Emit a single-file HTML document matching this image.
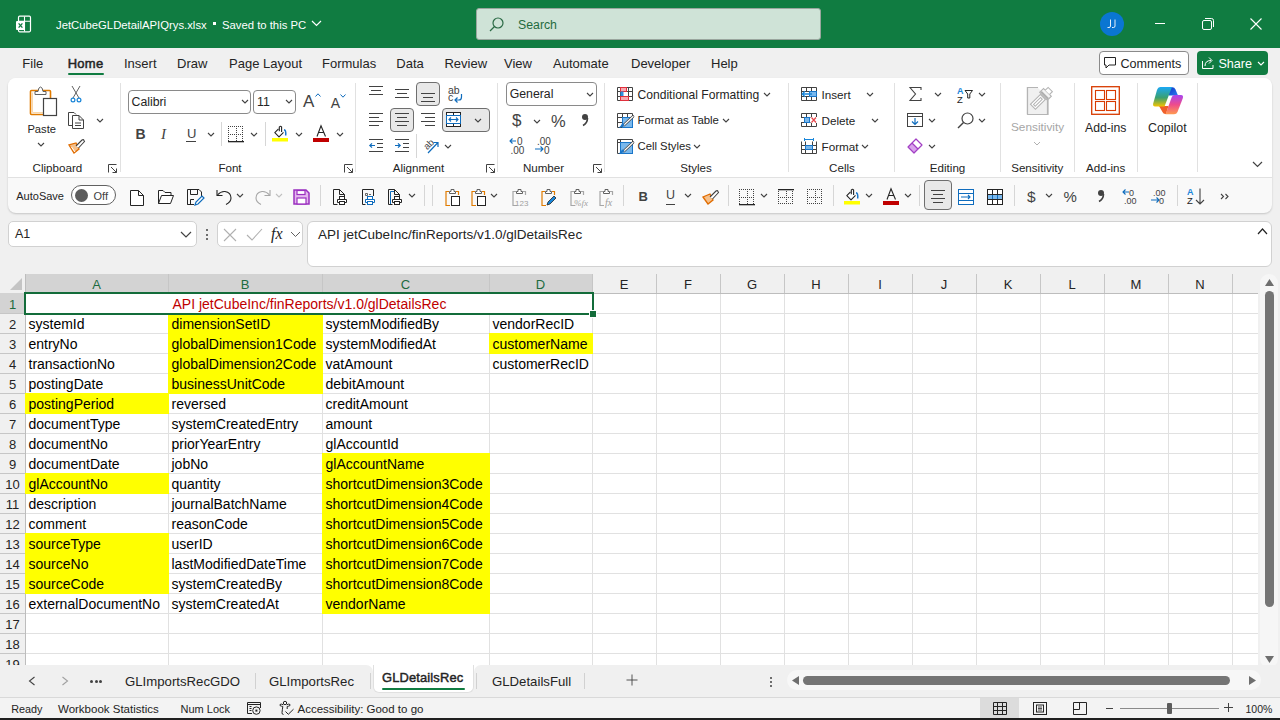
<!DOCTYPE html><html><head><meta charset="utf-8"><style>*{margin:0;padding:0;box-sizing:border-box}
html,body{width:1280px;height:720px;overflow:hidden;background:#f0f0f0;font-family:"Liberation Sans",sans-serif;color:#242424}
.a{position:absolute;white-space:nowrap}
svg{position:absolute;overflow:visible}
#title{left:0;top:0;width:1280px;height:48px;background:#107c41}
.t{position:absolute;white-space:nowrap;line-height:1}
</style></head><body><div class="a" style="left:0px;top:0px;width:1280px;height:48px;background:#107c41"></div>
<svg style="left:15px;top:15px" width="17" height="18" viewBox="0 0 17 18"><rect x="3.5" y="1.2" width="12" height="15.6" rx="1.2" fill="none" stroke="#fff" stroke-width="1.2"/><path d="M9.5 1.5 V16.5 M3.5 6.3 H15.5" stroke="#fff" stroke-width="1.1"/><rect x="1" y="6" width="9" height="9" rx="1" fill="#fff"/><path d="M3.6 8.3 L7.4 12.7 M7.4 8.3 L3.6 12.7" stroke="#107c41" stroke-width="1.3"/></svg>
<div class="t" style="left:56.00px;top:19.55px;font-size:11.3px;color:#fff;font-weight:400;">JetCubeGLDetailAPIQrys.xlsx</div>
<div class="a" style="left:213px;top:22px;width:3px;height:3px;background:#fff"></div>
<div class="t" style="left:222.00px;top:19.55px;font-size:11.3px;color:#fff;font-weight:400;">Saved to this PC</div>
<svg style="left:311px;top:20px" width="11" height="7" viewBox="0 0 11 7"><path d="M1 1 L5.5 5.5 L10 1" fill="none" stroke="#fff" stroke-width="1.2"/></svg>
<div class="a" style="left:476px;top:8px;width:345px;height:32px;background:#cfe3d7;border:1px solid #9aa69e;border-radius:3px"></div>
<svg style="left:489px;top:17px" width="15" height="15" viewBox="0 0 15 15"><circle cx="9" cy="6" r="5" fill="none" stroke="#2b6a45" stroke-width="1.2"/><path d="M5.5 9.5 L1 14" stroke="#2b6a45" stroke-width="1.3"/></svg>
<div class="t" style="left:518.00px;top:19.07px;font-size:12.3px;color:#1f6b40;font-weight:400;">Search</div>
<div class="a" style="left:1100px;top:12px;width:24px;height:24px;background:#0a76d2;border-radius:50%"></div>
<svg style="left:1107px;top:19px" width="10" height="10" viewBox="0 0 10 10"><path d="M3.5 0.5 V7 Q3.5 8.5 2 8.5 H0.5 M8 0.5 V7 Q8 8.5 6.5 8.5 H5" fill="none" stroke="#fff" stroke-width="0.9"/></svg>
<div class="a" style="left:1155px;top:23px;width:10px;height:1px;background:#fff"></div>
<svg style="left:1202px;top:18px" width="12" height="12" viewBox="0 0 12 12"><rect x="0.5" y="2.5" width="9" height="9" rx="1.5" fill="none" stroke="#fff" stroke-width="1"/><path d="M3 0.5 H9.5 Q11.5 0.5 11.5 2.5 V9" fill="none" stroke="#fff" stroke-width="1"/></svg>
<svg style="left:1250px;top:18px" width="12" height="12" viewBox="0 0 12 12"><path d="M0.5 0.5 L11.5 11.5 M11.5 0.5 L0.5 11.5" stroke="#fff" stroke-width="1.1"/></svg>
<div class="t" style="left:22.30px;top:57.13px;font-size:13px;color:#242424;font-weight:400;">File</div>
<div class="t" style="left:124.00px;top:57.13px;font-size:13px;color:#242424;font-weight:400;">Insert</div>
<div class="t" style="left:177.00px;top:57.13px;font-size:13px;color:#242424;font-weight:400;">Draw</div>
<div class="t" style="left:229.00px;top:57.13px;font-size:13px;color:#242424;font-weight:400;">Page Layout</div>
<div class="t" style="left:322.00px;top:57.13px;font-size:13px;color:#242424;font-weight:400;">Formulas</div>
<div class="t" style="left:396.30px;top:57.13px;font-size:13px;color:#242424;font-weight:400;">Data</div>
<div class="t" style="left:444.40px;top:57.13px;font-size:13px;color:#242424;font-weight:400;">Review</div>
<div class="t" style="left:504.00px;top:57.13px;font-size:13px;color:#242424;font-weight:400;">View</div>
<div class="t" style="left:553.00px;top:57.13px;font-size:13px;color:#242424;font-weight:400;">Automate</div>
<div class="t" style="left:631.00px;top:57.13px;font-size:13px;color:#242424;font-weight:400;">Developer</div>
<div class="t" style="left:711.00px;top:57.13px;font-size:13px;color:#242424;font-weight:400;">Help</div>
<div class="t" style="left:67.70px;top:57.13px;font-size:13px;color:#242424;font-weight:400;letter-spacing:0.25px;-webkit-text-stroke:0.5px #242424">Home</div>
<div class="a" style="left:68px;top:73px;width:36px;height:2px;background:#107c41;border-radius:1px"></div>
<div class="a" style="left:1099px;top:51px;width:90px;height:24px;background:#fff;border:1px solid #8a8a8a;border-radius:4px"></div>
<svg style="left:1104px;top:57px" width="12" height="12" viewBox="0 0 12 12"><path d="M0.5 0.5 H11.5 V8 H5 L2 11 V8 H0.5 Z" fill="none" stroke="#242424" stroke-width="1"/></svg>
<div class="t" style="left:1120.40px;top:58.43px;font-size:12.6px;color:#242424;font-weight:400;">Comments</div>
<div class="a" style="left:1197px;top:51px;width:71px;height:24px;background:#107c41;border-radius:4px"></div>
<svg style="left:1202px;top:56px" width="12" height="13" viewBox="0 0 12 13"><path d="M0.5 5 V12.5 H11 V9" fill="none" stroke="#fff" stroke-width="1"/><path d="M3 10 Q3 4.5 9 4.5 M7 1.5 L10 4.5 L7 7.5" fill="none" stroke="#fff" stroke-width="1"/></svg>
<div class="t" style="left:1218.40px;top:58.43px;font-size:12.6px;color:#fff;font-weight:400;">Share</div>
<svg style="left:1256.7px;top:60.5px" width="8" height="5.0" viewBox="0 0 8 5.0"><path d="M1 1 L4.0 4.0 L7 1" fill="none" stroke="#fff" stroke-width="1.1"/></svg>
<div class="a" style="left:8px;top:78px;width:1264px;height:135px;background:#f9f9f9;border-radius:8px;box-shadow:0 1px 2px rgba(0,0,0,0.18)"></div>
<div class="a" style="left:8px;top:78px;width:1264px;height:99px;background:#fff;border-radius:8px 8px 0 0"></div>
<div class="a" style="left:8px;top:177px;width:1264px;height:1px;background:#e1e1e1"></div>
<div class="a" style="left:120px;top:83px;width:1px;height:89px;background:#e1e1e1"></div>
<div class="a" style="left:355px;top:83px;width:1px;height:89px;background:#e1e1e1"></div>
<div class="a" style="left:497px;top:83px;width:1px;height:89px;background:#e1e1e1"></div>
<div class="a" style="left:604px;top:83px;width:1px;height:89px;background:#e1e1e1"></div>
<div class="a" style="left:788px;top:83px;width:1px;height:89px;background:#e1e1e1"></div>
<div class="a" style="left:894px;top:83px;width:1px;height:89px;background:#e1e1e1"></div>
<div class="a" style="left:1000px;top:83px;width:1px;height:89px;background:#e1e1e1"></div>
<div class="a" style="left:1074px;top:83px;width:1px;height:89px;background:#e1e1e1"></div>
<div class="a" style="left:1137px;top:83px;width:1px;height:89px;background:#e1e1e1"></div>
<div class="a" style="left:1197px;top:83px;width:1px;height:89px;background:#e1e1e1"></div>
<div class="t" style="left:-2.6000000000000014px;width:120px;text-align:center;top:162.41px;font-size:11.6px;color:#242424">Clipboard</div>
<div class="t" style="left:170px;width:120px;text-align:center;top:162.41px;font-size:11.6px;color:#242424">Font</div>
<div class="t" style="left:358.5px;width:120px;text-align:center;top:162.41px;font-size:11.6px;color:#242424">Alignment</div>
<div class="t" style="left:483.5px;width:120px;text-align:center;top:162.41px;font-size:11.6px;color:#242424">Number</div>
<div class="t" style="left:636px;width:120px;text-align:center;top:162.41px;font-size:11.6px;color:#242424">Styles</div>
<div class="t" style="left:782px;width:120px;text-align:center;top:162.41px;font-size:11.6px;color:#242424">Cells</div>
<div class="t" style="left:887.6px;width:120px;text-align:center;top:162.41px;font-size:11.6px;color:#242424">Editing</div>
<div class="t" style="left:977.3px;width:120px;text-align:center;top:162.41px;font-size:11.6px;color:#242424">Sensitivity</div>
<div class="t" style="left:1045.7px;width:120px;text-align:center;top:162.41px;font-size:11.6px;color:#242424">Add-ins</div>
<svg style="left:108px;top:164px" width="9" height="9" viewBox="0 0 9 9"><path d="M0.5 8.5 V0.5 H8.5 M3 3 L8.5 8.5 M8.5 4.5 V8.5 H4.5" fill="none" stroke="#424242" stroke-width="1"/></svg>
<svg style="left:344px;top:164px" width="9" height="9" viewBox="0 0 9 9"><path d="M0.5 8.5 V0.5 H8.5 M3 3 L8.5 8.5 M8.5 4.5 V8.5 H4.5" fill="none" stroke="#424242" stroke-width="1"/></svg>
<svg style="left:486px;top:164px" width="9" height="9" viewBox="0 0 9 9"><path d="M0.5 8.5 V0.5 H8.5 M3 3 L8.5 8.5 M8.5 4.5 V8.5 H4.5" fill="none" stroke="#424242" stroke-width="1"/></svg>
<svg style="left:593px;top:164px" width="9" height="9" viewBox="0 0 9 9"><path d="M0.5 8.5 V0.5 H8.5 M3 3 L8.5 8.5 M8.5 4.5 V8.5 H4.5" fill="none" stroke="#424242" stroke-width="1"/></svg>
<svg style="left:29px;top:86px" width="29" height="32" viewBox="0 0 29 32"><rect x="1.5" y="4.5" width="20" height="24" rx="1" fill="#fff" stroke="#e07b00" stroke-width="1.6"/><path d="M3.5 6.5 V26.5 H14" fill="none" stroke="#fbd7a8" stroke-width="1"/>
<path d="M6 8.5 V5.5 H9 Q9.5 1 11.5 1 Q13.5 1 14 5.5 H17 V8.5 Z" fill="#fff" stroke="#616161" stroke-width="1"/>
<rect x="14.5" y="12.5" width="13" height="17" fill="#fff" stroke="#424242" stroke-width="1.2"/></svg>
<div class="t" style="left:27.40px;top:123.60px;font-size:11.2px;color:#242424;font-weight:400;">Paste</div>
<svg style="left:36.5px;top:141.5px" width="8" height="5.0" viewBox="0 0 8 5.0"><path d="M1 1 L4.0 4.0 L7 1" fill="none" stroke="#424242" stroke-width="1.1"/></svg>
<svg style="left:70px;top:86px" width="12" height="17" viewBox="0 0 12 17"><path d="M2 0 L9 12 M10 0 L3 12" stroke="#616161" stroke-width="1"/><circle cx="3" cy="14" r="1.9" fill="#fff" stroke="#1a86d9" stroke-width="1.2"/><circle cx="9" cy="14" r="1.9" fill="#fff" stroke="#1a86d9" stroke-width="1.2"/></svg>
<svg style="left:68px;top:112px" width="17" height="17" viewBox="0 0 17 17"><path d="M4.5 13.5 H0.5 V0.5 H6 L8 2.5" fill="none" stroke="#424242" stroke-width="1"/><path d="M4.5 3.5 H11 L15.5 8 V16.5 H4.5 Z M11 3.5 V8 H15.5 M7 11 H13 M7 13.5 H13" fill="#fff" stroke="#424242" stroke-width="1"/></svg>
<svg style="left:95.5px;top:117.5px" width="8" height="5.0" viewBox="0 0 8 5.0"><path d="M1 1 L4.0 4.0 L7 1" fill="none" stroke="#424242" stroke-width="1.1"/></svg>
<svg style="left:68px;top:137px" width="17" height="17" viewBox="0 0 17 17"><path d="M1 8 L6 16 L11 12 L8 6 Z" fill="#f6c08a" stroke="#e06c00" stroke-width="1.3"/><path d="M8 9 L14 3 Q15.5 2 16 3.5 L16.5 4.5 L10.5 11" fill="#fff" stroke="#424242" stroke-width="1.1"/><path d="M3.5 10 L7 15" stroke="#fff" stroke-width="1"/></svg>
<div class="a" style="left:128px;top:90px;width:123px;height:24px;background:#fff;border:1px solid #8a8a8a;border-radius:4px"></div>
<div class="t" style="left:131.50px;top:95.87px;font-size:12.3px;color:#242424;font-weight:400;">Calibri</div>
<svg style="left:240.5px;top:99.3px" width="8" height="5.0" viewBox="0 0 8 5.0"><path d="M1 1 L4.0 4.0 L7 1" fill="none" stroke="#424242" stroke-width="1.1"/></svg>
<div class="a" style="left:253px;top:90px;width:43px;height:24px;background:#fff;border:1px solid #8a8a8a;border-radius:4px"></div>
<div class="t" style="left:257.00px;top:95.87px;font-size:12.3px;color:#242424;font-weight:400;">11</div>
<svg style="left:285.0px;top:99.3px" width="8" height="5.0" viewBox="0 0 8 5.0"><path d="M1 1 L4.0 4.0 L7 1" fill="none" stroke="#424242" stroke-width="1.1"/></svg>
<div class="t" style="left:303.00px;top:93.31px;font-size:17px;color:#424242;font-weight:400;">A</div>
<svg style="left:315px;top:93px" width="6" height="4" viewBox="0 0 6 4"><path d="M0.5 3.5 L3 0.8 L5.5 3.5" fill="none" stroke="#0f6cbd" stroke-width="1"/></svg>
<div class="t" style="left:330.70px;top:96.25px;font-size:14px;color:#424242;font-weight:400;">A</div>
<svg style="left:340px;top:94px" width="6" height="4" viewBox="0 0 6 4"><path d="M0.5 0.5 L3 3.2 L5.5 0.5" fill="none" stroke="#0f6cbd" stroke-width="1"/></svg>
<div class="t" style="left:135.50px;top:126.95px;font-size:14px;color:#424242;font-weight:700;">B</div>
<div class="t" style="left:161px;top:126.5px;font-family:'Liberation Serif',serif;font-style:italic;font-size:15px;color:#424242">I</div>
<div class="t" style="left:187.00px;top:126.73px;font-size:13px;color:#424242;font-weight:400;">U</div>
<div class="a" style="left:186px;top:141px;width:10px;height:1px;background:#424242"></div>
<svg style="left:206.6px;top:131.5px" width="8" height="5.0" viewBox="0 0 8 5.0"><path d="M1 1 L4.0 4.0 L7 1" fill="none" stroke="#424242" stroke-width="1.1"/></svg>
<div class="a" style="left:221px;top:122px;width:1px;height:24px;background:#d6d6d6"></div>
<svg style="left:228px;top:126px" width="16" height="16" viewBox="0 0 16 16"><rect x="0" y="0" width="1" height="1" fill="#424242"/><rect x="2" y="0" width="1" height="1" fill="#424242"/><rect x="4" y="0" width="1" height="1" fill="#424242"/><rect x="6" y="0" width="1" height="1" fill="#424242"/><rect x="8" y="0" width="1" height="1" fill="#424242"/><rect x="10" y="0" width="1" height="1" fill="#424242"/><rect x="12" y="0" width="1" height="1" fill="#424242"/><rect x="14" y="0" width="1" height="1" fill="#424242"/><rect x="0" y="8" width="1" height="1" fill="#424242"/><rect x="2" y="8" width="1" height="1" fill="#424242"/><rect x="4" y="8" width="1" height="1" fill="#424242"/><rect x="6" y="8" width="1" height="1" fill="#424242"/><rect x="8" y="8" width="1" height="1" fill="#424242"/><rect x="10" y="8" width="1" height="1" fill="#424242"/><rect x="12" y="8" width="1" height="1" fill="#424242"/><rect x="14" y="8" width="1" height="1" fill="#424242"/><rect x="0" y="0" width="1" height="1" fill="#424242"/><rect x="0" y="2" width="1" height="1" fill="#424242"/><rect x="0" y="4" width="1" height="1" fill="#424242"/><rect x="0" y="6" width="1" height="1" fill="#424242"/><rect x="0" y="8" width="1" height="1" fill="#424242"/><rect x="0" y="10" width="1" height="1" fill="#424242"/><rect x="0" y="12" width="1" height="1" fill="#424242"/><rect x="0" y="14" width="1" height="1" fill="#424242"/><rect x="8" y="0" width="1" height="1" fill="#424242"/><rect x="8" y="2" width="1" height="1" fill="#424242"/><rect x="8" y="4" width="1" height="1" fill="#424242"/><rect x="8" y="6" width="1" height="1" fill="#424242"/><rect x="8" y="8" width="1" height="1" fill="#424242"/><rect x="8" y="10" width="1" height="1" fill="#424242"/><rect x="8" y="12" width="1" height="1" fill="#424242"/><rect x="8" y="14" width="1" height="1" fill="#424242"/><rect x="14" y="0" width="1" height="1" fill="#424242"/><rect x="14" y="2" width="1" height="1" fill="#424242"/><rect x="14" y="4" width="1" height="1" fill="#424242"/><rect x="14" y="6" width="1" height="1" fill="#424242"/><rect x="14" y="8" width="1" height="1" fill="#424242"/><rect x="14" y="10" width="1" height="1" fill="#424242"/><rect x="14" y="12" width="1" height="1" fill="#424242"/><rect x="14" y="14" width="1" height="1" fill="#424242"/><rect x="0" y="15" width="16" height="1.3" fill="#242424"/></svg>
<svg style="left:250.3px;top:131.5px" width="8" height="5.0" viewBox="0 0 8 5.0"><path d="M1 1 L4.0 4.0 L7 1" fill="none" stroke="#424242" stroke-width="1.1"/></svg>
<div class="a" style="left:265px;top:122px;width:1px;height:24px;background:#d6d6d6"></div>
<svg style="left:272px;top:124px" width="17" height="18" viewBox="0 0 17 18"><path d="M6.5 4.8 L2.8 8.6 L7 12.8 L11.5 8.3" fill="#fff" stroke="#242424" stroke-width="1.1" stroke-linejoin="round"/><path d="M7.3 7.3 V3 Q8.6 1.5 9.6 3 V8" fill="none" stroke="#242424" stroke-width="1.1"/><path d="M12 5.7 Q14.2 6 13.7 11.5" fill="none" stroke="#1a76c9" stroke-width="1.5"/><rect x="0" y="14" width="16" height="3.5" fill="#ffff00"/></svg>
<svg style="left:294.5px;top:131.5px" width="8" height="5.0" viewBox="0 0 8 5.0"><path d="M1 1 L4.0 4.0 L7 1" fill="none" stroke="#424242" stroke-width="1.1"/></svg>
<svg style="left:316px;top:125px" width="11" height="12" viewBox="0 0 11 12"><path d="M1 11.5 L5 0.8 L9.5 11.5 M2.6 7.5 H8" fill="none" stroke="#242424" stroke-width="1.1"/></svg>
<div class="a" style="left:313px;top:138px;width:16px;height:4px;background:#c00000"></div>
<svg style="left:336.0px;top:131.5px" width="8" height="5.0" viewBox="0 0 8 5.0"><path d="M1 1 L4.0 4.0 L7 1" fill="none" stroke="#424242" stroke-width="1.1"/></svg>
<svg style="left:369px;top:86px" width="14" height="12" viewBox="0 0 14 12"><path d="M0.0 0.5 H14.0" stroke="#424242" stroke-width="1"/><path d="M2.0 4.5 H12.0" stroke="#424242" stroke-width="1"/><path d="M0.0 8.5 H14.0" stroke="#424242" stroke-width="1"/></svg>
<svg style="left:395px;top:89px" width="14" height="12" viewBox="0 0 14 12"><path d="M0.0 0.5 H14.0" stroke="#424242" stroke-width="1"/><path d="M2.0 4.5 H12.0" stroke="#424242" stroke-width="1"/><path d="M0.0 8.5 H14.0" stroke="#424242" stroke-width="1"/></svg>
<div class="a" style="left:416px;top:82px;width:24px;height:24px;background:#e8e8e8;border:1px solid #6e6e6e;border-radius:4px"></div>
<svg style="left:421px;top:93px" width="14" height="12" viewBox="0 0 14 12"><path d="M0.0 0.5 H14.0" stroke="#424242" stroke-width="1"/><path d="M2.0 4.5 H12.0" stroke="#424242" stroke-width="1"/><path d="M0.0 8.5 H14.0" stroke="#424242" stroke-width="1"/></svg>
<div class="t" style="left:448.00px;top:85.11px;font-size:10.5px;color:#424242;font-weight:400;">ab</div>
<div class="t" style="left:448.00px;top:91.61px;font-size:10.5px;color:#424242;font-weight:400;">c</div>
<svg style="left:454px;top:94px" width="9" height="8" viewBox="0 0 9 8"><path d="M7.5 0 V3 Q7.5 6 5 6 H1 M3.5 3.5 L1 6 L3.5 8.5" fill="none" stroke="#0f6cbd" stroke-width="1.2"/></svg>
<svg style="left:369px;top:113px" width="14" height="16" viewBox="0 0 14 16"><path d="M0 0.5 H14" stroke="#424242" stroke-width="1"/><path d="M0 4.5 H10" stroke="#424242" stroke-width="1"/><path d="M0 8.5 H14" stroke="#424242" stroke-width="1"/><path d="M0 12.5 H10" stroke="#424242" stroke-width="1"/></svg>
<div class="a" style="left:390px;top:108px;width:24px;height:24px;background:#e8e8e8;border:1px solid #6e6e6e;border-radius:4px"></div>
<svg style="left:395px;top:113px" width="14" height="16" viewBox="0 0 14 16"><path d="M0.0 0.5 H14.0" stroke="#424242" stroke-width="1"/><path d="M2.0 4.5 H12.0" stroke="#424242" stroke-width="1"/><path d="M0.0 8.5 H14.0" stroke="#424242" stroke-width="1"/><path d="M2.0 12.5 H12.0" stroke="#424242" stroke-width="1"/></svg>
<svg style="left:421px;top:113px" width="14" height="16" viewBox="0 0 14 16"><path d="M0 0.5 H14" stroke="#424242" stroke-width="1"/><path d="M4 4.5 H14" stroke="#424242" stroke-width="1"/><path d="M0 8.5 H14" stroke="#424242" stroke-width="1"/><path d="M4 12.5 H14" stroke="#424242" stroke-width="1"/></svg>
<div class="a" style="left:442px;top:108px;width:48px;height:24px;background:#e8e8e8;border:1px solid #6e6e6e;border-radius:4px"></div>
<svg style="left:446px;top:112px" width="15" height="15" viewBox="0 0 15 15"><rect x="0.5" y="0.5" width="14" height="14" fill="#fff" stroke="#242424" stroke-width="1"/><path d="M7.5 0.5 V3.5 M7.5 11.5 V14.5" stroke="#242424" stroke-width="1"/><rect x="0.5" y="3.5" width="14" height="8" fill="#fff" stroke="#0f6cbd" stroke-width="1"/><path d="M3 7.5 H12 M5 5.5 L3 7.5 L5 9.5 M10 5.5 L12 7.5 L10 9.5" fill="none" stroke="#0f6cbd" stroke-width="1.1"/></svg>
<svg style="left:473.6px;top:118.0px" width="8" height="5.0" viewBox="0 0 8 5.0"><path d="M1 1 L4.0 4.0 L7 1" fill="none" stroke="#424242" stroke-width="1.1"/></svg>
<svg style="left:369px;top:139px" width="14" height="13" viewBox="0 0 14 13"><path d="M0 0.5 H14 M8 4.5 H14 M8 8.5 H14 M0 12.5 H14" stroke="#424242" stroke-width="1"/><path d="M6 6.5 H0.8 M3 4.3 L0.8 6.5 L3 8.7" fill="none" stroke="#0f6cbd" stroke-width="1.2"/></svg>
<svg style="left:395px;top:139px" width="14" height="13" viewBox="0 0 14 13"><path d="M0 0.5 H14 M8 4.5 H14 M8 8.5 H14 M0 12.5 H14" stroke="#424242" stroke-width="1"/><path d="M0 6.5 H5.2 M3 4.3 L5.2 6.5 L3 8.7" fill="none" stroke="#0f6cbd" stroke-width="1.2"/></svg>
<div class="a" style="left:416px;top:134px;width:1px;height:24px;background:#d6d6d6"></div>
<svg style="left:422px;top:137px" width="18" height="17" viewBox="0 0 18 17"><text x="1" y="11" font-family="Liberation Sans" font-size="9.5" fill="#424242" transform="rotate(-45 6 7)">ab</text><path d="M6 16 L16 5.5 M11.5 5.5 H16 V10" fill="none" stroke="#0f6cbd" stroke-width="1.2"/></svg>
<svg style="left:443.5px;top:143.5px" width="8" height="5.0" viewBox="0 0 8 5.0"><path d="M1 1 L4.0 4.0 L7 1" fill="none" stroke="#424242" stroke-width="1.1"/></svg>
<div class="a" style="left:506px;top:82px;width:91px;height:24px;background:#fff;border:1px solid #8a8a8a;border-radius:4px"></div>
<div class="t" style="left:509.70px;top:88.07px;font-size:12.3px;color:#242424;font-weight:400;">General</div>
<svg style="left:586.3px;top:91.5px" width="8" height="5.0" viewBox="0 0 8 5.0"><path d="M1 1 L4.0 4.0 L7 1" fill="none" stroke="#424242" stroke-width="1.1"/></svg>
<div class="t" style="left:512.00px;top:112.31px;font-size:17px;color:#424242;font-weight:400;">$</div>
<svg style="left:532.8px;top:118.5px" width="8" height="5.0" viewBox="0 0 8 5.0"><path d="M1 1 L4.0 4.0 L7 1" fill="none" stroke="#424242" stroke-width="1.1"/></svg>
<div class="t" style="left:551.00px;top:112.55px;font-size:16.5px;color:#424242;font-weight:400;">%</div>
<svg style="left:581px;top:113px" width="8" height="13" viewBox="0 0 8 13"><circle cx="4" cy="4" r="3" fill="#424242"/><path d="M6.5 5 Q6.5 10 2 12.5" fill="none" stroke="#424242" stroke-width="1.6"/></svg>
<svg style="left:509px;top:137px" width="17" height="17" viewBox="0 0 17 17"><text x="8" y="8" font-family="Liberation Sans" font-size="10" fill="#424242">0</text><text x="1.5" y="16.5" font-family="Liberation Sans" font-size="10" fill="#424242">.00</text><path d="M7 4 H1 M3.5 1.5 L1 4 L3.5 6.5" fill="none" stroke="#0f6cbd" stroke-width="1.1"/></svg>
<svg style="left:535px;top:137px" width="17" height="17" viewBox="0 0 17 17"><text x="2" y="8" font-family="Liberation Sans" font-size="10" fill="#424242">.00</text><text x="9" y="16.5" font-family="Liberation Sans" font-size="10" fill="#424242">0</text><path d="M0 12 H8 M5.5 9.5 L8 12 L5.5 14.5" fill="none" stroke="#0f6cbd" stroke-width="1.1"/></svg>
<svg style="left:617px;top:87px" width="16" height="14" viewBox="0 0 16 14"><path d="M0.5 0.5 H15.5 V13.5 H0.5 Z M11.5 0.5 V13.5 M0.5 4.5 H15.5 M0.5 9.5 H15.5 M3.5 0.5 V13.5" fill="none" stroke="#424242" stroke-width="1"/><rect x="3.5" y="0.5" width="6" height="4" fill="#f7a8b0" stroke="#e0303c" stroke-width="1"/><rect x="3.5" y="4.5" width="3" height="5" fill="#2f8fe0"/><rect x="3.5" y="9.5" width="8" height="4" fill="#f7a8b0" stroke="#e0303c" stroke-width="1"/></svg>
<div class="t" style="left:637.50px;top:88.87px;font-size:12.1px;color:#242424;font-weight:400;">Conditional Formatting</div>
<svg style="left:762.5px;top:92.0px" width="8" height="5.0" viewBox="0 0 8 5.0"><path d="M1 1 L4.0 4.0 L7 1" fill="none" stroke="#424242" stroke-width="1.1"/></svg>
<svg style="left:617px;top:113px" width="17" height="15" viewBox="0 0 17 15"><path d="M0.5 0.5 H15.5 V14.5 H0.5 Z M5.5 0.5 V14.5 M10.5 0.5 V4.5 M0.5 4.5 H15.5 M0.5 9.5 H5.5" fill="none" stroke="#424242" stroke-width="1"/><rect x="5.5" y="4.5" width="10" height="10" fill="#7ab8ec" stroke="#1a76c9" stroke-width="1"/><path d="M16 3.5 L7 12" stroke="#424242" stroke-width="2.6" stroke-linecap="round"/><path d="M16 3.5 L7 12" stroke="#fff" stroke-width="1.2" stroke-linecap="round"/><path d="M7.5 11 Q6 15 1.5 14.8 Q4 13 5 10.5 Z" fill="#1a76c9"/></svg>
<div class="t" style="left:637.50px;top:115.01px;font-size:11.4px;color:#242424;font-weight:400;">Format as Table</div>
<svg style="left:721.5px;top:118.0px" width="8" height="5.0" viewBox="0 0 8 5.0"><path d="M1 1 L4.0 4.0 L7 1" fill="none" stroke="#424242" stroke-width="1.1"/></svg>
<svg style="left:617px;top:139px" width="17" height="15" viewBox="0 0 17 15"><path d="M0.5 0.5 H15.5 V14.5 H0.5 Z M0.5 3.5 H15.5 M3.5 0.5 V14.5" fill="none" stroke="#424242" stroke-width="1"/><rect x="3.5" y="3.5" width="12" height="11" fill="#7ab8ec" stroke="#1a76c9" stroke-width="1"/><path d="M16 3.5 L7 12" stroke="#424242" stroke-width="2.6" stroke-linecap="round"/><path d="M16 3.5 L7 12" stroke="#fff" stroke-width="1.2" stroke-linecap="round"/><path d="M7.5 11 Q6 15 1.5 14.8 Q4 13 5 10.5 Z" fill="#1a76c9"/></svg>
<div class="t" style="left:637.50px;top:140.85px;font-size:11.3px;color:#242424;font-weight:400;">Cell Styles</div>
<svg style="left:692.6px;top:143.8px" width="8" height="5.0" viewBox="0 0 8 5.0"><path d="M1 1 L4.0 4.0 L7 1" fill="none" stroke="#424242" stroke-width="1.1"/></svg>
<svg style="left:801px;top:87px" width="16" height="14" viewBox="0 0 16 14"><path d="M0.5 0.5 H15.5 V13.5 H0.5 Z M5.5 0.5 V4.5 M10.5 0.5 V4.5 M5.5 9.5 V13.5 M10.5 9.5 V13.5 M0.5 4.5 H15.5 M0.5 9.5 H15.5" fill="none" stroke="#424242" stroke-width="1"/><rect x="8.5" y="4.5" width="7" height="5" fill="#7ab8ec" stroke="#1a76c9" stroke-width="1"/><path d="M11 7 H1.3 M4 4.3 L1.3 7 L4 9.7" fill="none" stroke="#1a86d9" stroke-width="1.3"/></svg>
<div class="t" style="left:821.50px;top:89.06px;font-size:11.7px;color:#242424;font-weight:400;">Insert</div>
<svg style="left:866.0px;top:92.0px" width="8" height="5.0" viewBox="0 0 8 5.0"><path d="M1 1 L4.0 4.0 L7 1" fill="none" stroke="#424242" stroke-width="1.1"/></svg>
<svg style="left:801px;top:113px" width="16" height="14" viewBox="0 0 16 14"><path d="M0.5 0.5 H15.5 V13.5 H0.5 Z M5.5 0.5 V4.5 M10.5 0.5 V4.5 M5.5 9.5 V13.5 M10.5 9.5 V13.5 M0.5 4.5 H15.5 M0.5 9.5 H15.5" fill="none" stroke="#424242" stroke-width="1"/><rect x="0" y="5" width="2.5" height="4" fill="#fff"/><rect x="9.5" y="4" width="7" height="6" fill="#fff"/><rect x="3.5" y="4.5" width="5" height="5" fill="#7ab8ec" stroke="#1a76c9" stroke-width="1"/><path d="M10.5 4.5 L15 9.5 M15 4.5 L10.5 9.5" stroke="#e8464a" stroke-width="1.2"/></svg>
<div class="t" style="left:821.50px;top:114.86px;font-size:11.7px;color:#242424;font-weight:400;">Delete</div>
<svg style="left:870.5px;top:118.0px" width="8" height="5.0" viewBox="0 0 8 5.0"><path d="M1 1 L4.0 4.0 L7 1" fill="none" stroke="#424242" stroke-width="1.1"/></svg>
<svg style="left:801px;top:138px" width="16" height="16" viewBox="0 0 16 16"><path d="M3 1.5 H13 M3.5 0 V3 M12.5 0 V3" stroke="#1a86d9" stroke-width="1"/><path d="M0.5 3.5 V15.5 H15.5 V3.5 M0.5 7.5 H15.5 M0.5 11.5 H15.5 M4.5 3.5 V15.5 M11.5 3.5 V15.5" fill="none" stroke="#424242" stroke-width="1"/><rect x="4.5" y="7.5" width="7" height="4" fill="#7ab8ec" stroke="#1a76c9" stroke-width="1"/></svg>
<div class="t" style="left:821.50px;top:140.66px;font-size:11.7px;color:#242424;font-weight:400;">Format</div>
<svg style="left:861.4px;top:143.8px" width="8" height="5.0" viewBox="0 0 8 5.0"><path d="M1 1 L4.0 4.0 L7 1" fill="none" stroke="#424242" stroke-width="1.1"/></svg>
<svg style="left:909px;top:87px" width="13" height="14" viewBox="0 0 13 14"><path d="M12 3 V0.5 H1 L6.5 7 L1 13.5 H12 V11" fill="none" stroke="#424242" stroke-width="1.1"/></svg>
<svg style="left:934.3px;top:92.0px" width="8" height="5.0" viewBox="0 0 8 5.0"><path d="M1 1 L4.0 4.0 L7 1" fill="none" stroke="#424242" stroke-width="1.1"/></svg>
<svg style="left:956px;top:86px" width="18" height="17" viewBox="0 0 18 17"><text x="1" y="8" font-family="Liberation Sans" font-weight="700" font-size="9" fill="#1a86d9">A</text><text x="1" y="16.5" font-family="Liberation Sans" font-size="9.5" fill="#242424">Z</text><path d="M9 4.5 H16.5 L13.8 8 V12 H11.7 V8 Z" fill="none" stroke="#242424" stroke-width="1"/></svg>
<svg style="left:977.8px;top:92.0px" width="8" height="5.0" viewBox="0 0 8 5.0"><path d="M1 1 L4.0 4.0 L7 1" fill="none" stroke="#424242" stroke-width="1.1"/></svg>
<svg style="left:907px;top:113px" width="16" height="14" viewBox="0 0 16 14"><rect x="0.5" y="0.5" width="15" height="13" fill="#fff" stroke="#424242" stroke-width="1"/><path d="M0.5 3.5 H15.5" stroke="#424242" stroke-width="1"/><path d="M8 5 V11.5 M5 8.5 L8 11.5 L11 8.5" fill="none" stroke="#0f6cbd" stroke-width="1.2"/></svg>
<svg style="left:927.5px;top:118.0px" width="8" height="5.0" viewBox="0 0 8 5.0"><path d="M1 1 L4.0 4.0 L7 1" fill="none" stroke="#424242" stroke-width="1.1"/></svg>
<svg style="left:957px;top:112px" width="17" height="17" viewBox="0 0 17 17"><circle cx="10.5" cy="6.5" r="5.5" fill="none" stroke="#424242" stroke-width="1.2"/><path d="M6.5 10.5 L1 16" stroke="#424242" stroke-width="1.4"/></svg>
<svg style="left:977.8px;top:118.0px" width="8" height="5.0" viewBox="0 0 8 5.0"><path d="M1 1 L4.0 4.0 L7 1" fill="none" stroke="#424242" stroke-width="1.1"/></svg>
<svg style="left:907px;top:138px" width="16" height="16" viewBox="0 0 16 16"><path d="M1 9 L5 5 L11 11 L7 15 Z" fill="#d9a2ec"/><path d="M1 9 L9 1 L15 7 L7 15 Z M5 5 L11 11" fill="none" stroke="#a23fc4" stroke-width="1.2" stroke-linejoin="round"/></svg>
<svg style="left:927.5px;top:143.8px" width="8" height="5.0" viewBox="0 0 8 5.0"><path d="M1 1 L4.0 4.0 L7 1" fill="none" stroke="#424242" stroke-width="1.1"/></svg>
<svg style="left:1025px;top:85px" width="32" height="32" viewBox="0 0 32 32"><path d="M2.5 29.5 V2.5 H13 M2.5 29.5 H23 V15" fill="#f0f0f0" stroke="#b4b4b4" stroke-width="1.2"/><path d="M3 3 H13 L23 13 V29 H3 Z" fill="#f0f0f0"/><path d="M2.5 29.5 V2.5 H13 M2.5 29.5 H22.5 V15" fill="none" stroke="#b4b4b4" stroke-width="1.2"/><g transform="translate(12.9 16.9) rotate(-45)"><rect x="-7" y="-3.5" width="14" height="7" fill="#fff" stroke="#b4b4b4" stroke-width="1.1"/><rect x="-5" y="-1.2" width="10" height="2.4" fill="none" stroke="#b4b4b4" stroke-width="1"/><rect x="8" y="-5.5" width="5.5" height="11" fill="#f4f4f4" stroke="#b4b4b4" stroke-width="1.1"/><rect x="8.5" y="-5" width="2" height="10" fill="#b0b0b0"/><path d="M13.5 -3 H17.5 V3 H13.5" fill="#fff" stroke="#b4b4b4" stroke-width="1.1"/></g></svg>
<div class="t" style="left:1011.00px;top:122.11px;font-size:11.8px;color:#a6a6a6;font-weight:400;">Sensitivity</div>
<svg style="left:1033.3px;top:140.5px" width="8" height="5.0" viewBox="0 0 8 5.0"><path d="M1 1 L4.0 4.0 L7 1" fill="none" stroke="#b0b0b0" stroke-width="1"/></svg>
<svg style="left:1091px;top:86px" width="29" height="29" viewBox="0 0 29 29"><rect x="0.7" y="0.7" width="27.6" height="27.6" fill="none" stroke="#d83b01" stroke-width="1.3"/><rect x="4.5" y="4.5" width="9" height="9" fill="none" stroke="#d83b01" stroke-width="1.1"/><rect x="15.5" y="4.5" width="9" height="9" fill="none" stroke="#d83b01" stroke-width="1.1"/><rect x="4.5" y="15.5" width="9" height="9" fill="none" stroke="#d83b01" stroke-width="1.1"/><rect x="15.5" y="15.5" width="9" height="9" fill="none" stroke="#d83b01" stroke-width="1.1"/></svg>
<div class="t" style="left:1085.00px;top:121.92px;font-size:12.2px;color:#242424;font-weight:400;">Add-ins</div>
<svg style="left:1152px;top:86px" width="32" height="30" viewBox="0 0 32 30"><defs><linearGradient id="cg1" x1="0" y1="0" x2="0" y2="1"><stop offset="0" stop-color="#1aa8f5"/><stop offset="0.55" stop-color="#3aa070"/><stop offset="1" stop-color="#f5c400"/></linearGradient>
<linearGradient id="cg2" x1="0" y1="0" x2="0" y2="1"><stop offset="0" stop-color="#a845f0"/><stop offset="0.5" stop-color="#ee4c8c"/><stop offset="1" stop-color="#ff9a50"/></linearGradient>
<linearGradient id="cg3" x1="0" y1="0" x2="1" y2="1"><stop offset="0" stop-color="#1038c8"/><stop offset="1" stop-color="#2a7cf0"/></linearGradient></defs>
<path d="M17 1.2 H20.5 Q22.5 1.2 23.5 3.5 L26 9.5 H17 Z" fill="url(#cg3)"/>
<path d="M7 20 H16.5 L14 28 Q11.5 28.5 10.5 26 Z" fill="#f0602a"/>
<path d="M8.5 1 H20 L12.5 20.5 H3 Q0.6 20.5 1.2 17.5 L5 4 Q6 1 8.5 1 Z" fill="url(#cg1)"/>
<path d="M22.5 9 H29 Q31.6 9 30.9 12 L25.5 26 Q24.6 28.2 22 28.2 H13.5 L19.8 11 Q20.6 9 22.5 9 Z" fill="url(#cg2)"/></svg>
<div class="t" style="left:1148.00px;top:121.82px;font-size:12.4px;color:#242424;font-weight:400;">Copilot</div>
<svg style="left:1252px;top:161px" width="11" height="7" viewBox="0 0 11 7"><path d="M1 1 L5.5 5.5 L10 1" fill="none" stroke="#424242" stroke-width="1.2"/></svg>
<div class="t" style="left:16.25px;top:190.70px;font-size:11px;color:#242424;font-weight:400;">AutoSave</div>
<div class="a" style="left:71px;top:185px;width:45px;height:20px;background:#fff;border:1px solid #616161;border-radius:10px"></div>
<div class="a" style="left:74.5px;top:188.5px;width:13.5px;height:13.5px;background:#5c5c5c;border-radius:50%"></div>
<div class="t" style="left:93.50px;top:190.70px;font-size:11px;color:#424242;font-weight:400;">Off</div>
<svg style="left:130px;top:190px" width="14" height="16" viewBox="0 0 14 16"><path d="M0.5 0.5 H8.5 L13.5 5.5 V15.5 H0.5 Z M8.5 0.5 V5.5 H13.5" fill="#fff" stroke="#242424" stroke-width="1"/></svg>
<svg style="left:158px;top:190px" width="16" height="14" viewBox="0 0 16 14"><path d="M0.5 13.5 V0.5 H5 L7 2.5 H13 V5.5 M0.5 13.5 L3.5 5.5 H15.5 L12.5 13.5 Z" fill="#fff" stroke="#242424" stroke-width="1" stroke-linejoin="round"/></svg>
<svg style="left:187px;top:189px" width="17" height="17" viewBox="0 0 17 17"><path d="M0.5 0.5 H12 L14.5 3 V8 M7 15.5 H0.5 Z M0.5 0.5 V15.5" fill="none" stroke="#242424" stroke-width="1"/><path d="M3.5 0.5 V5.5 H10.5 V0.5 M3.5 15.5 V10.5 H7" fill="none" stroke="#242424" stroke-width="1"/><path d="M8 16 L9 13 L15 7 L17 9 L11 15 Z" fill="#fff" stroke="#0f6cbd" stroke-width="1.2"/></svg>
<svg style="left:216px;top:189px" width="16" height="16" viewBox="0 0 16 16"><path d="M1 1 V6.5 H6.5" fill="none" stroke="#242424" stroke-width="1.1"/><path d="M1.5 6 Q5 2 9 2.5 Q15 3.5 15 9 Q15 13 10 15.5" fill="none" stroke="#242424" stroke-width="1.1"/></svg>
<svg style="left:236.3px;top:192.8px" width="8" height="5.0" viewBox="0 0 8 5.0"><path d="M1 1 L4.0 4.0 L7 1" fill="none" stroke="#424242" stroke-width="1.1"/></svg>
<svg style="left:255px;top:189px" width="16" height="16" viewBox="0 0 16 16"><path d="M15 1 V6.5 H9.5" fill="none" stroke="#a6a6a6" stroke-width="1.1"/><path d="M14.5 6 Q11 2 7 2.5 Q1 3.5 1 9 Q1 13 6 15.5" fill="none" stroke="#a6a6a6" stroke-width="1.1"/></svg>
<svg style="left:275.0px;top:192.8px" width="8" height="5.0" viewBox="0 0 8 5.0"><path d="M1 1 L4.0 4.0 L7 1" fill="none" stroke="#c0c0c0" stroke-width="1.1"/></svg>
<svg style="left:293px;top:189px" width="17" height="16" viewBox="0 0 17 16"><path d="M1 1 H13 L16 4 V15 H1 Z" fill="#e4b6ee" stroke="#9b30c0" stroke-width="1.5"/><rect x="4" y="1.5" width="8" height="4" fill="#fff" stroke="#9b30c0" stroke-width="1.2"/><rect x="4" y="9" width="9" height="6" fill="#fff" stroke="#9b30c0" stroke-width="1.2"/></svg>
<div class="a" style="left:320px;top:185px;width:1px;height:21px;background:#d6d6d6"></div>
<div class="a" style="left:424px;top:185px;width:1px;height:21px;background:#d6d6d6"></div>
<div class="a" style="left:432px;top:185px;width:1px;height:21px;background:#d6d6d6"></div>
<div class="a" style="left:623px;top:185px;width:1px;height:21px;background:#d6d6d6"></div>
<div class="a" style="left:728px;top:185px;width:1px;height:21px;background:#d6d6d6"></div>
<div class="a" style="left:833px;top:185px;width:1px;height:21px;background:#d6d6d6"></div>
<div class="a" style="left:919px;top:185px;width:1px;height:21px;background:#d6d6d6"></div>
<div class="a" style="left:1014px;top:185px;width:1px;height:21px;background:#d6d6d6"></div>
<div class="a" style="left:1177px;top:185px;width:1px;height:21px;background:#d6d6d6"></div>
<svg style="left:333px;top:189px" width="15" height="16" viewBox="0 0 15 16"><path d="M4.5 15.5 H0.5 V0.5 H6.5 L11.5 5.5 V7" fill="none" stroke="#242424" stroke-width="1"/><path d="M6.5 0.5 V5.5 H11.5" fill="none" stroke="#242424" stroke-width="1"/><rect x="6.5" y="7.5" width="5" height="3" fill="#fff" stroke="#242424" stroke-width="1"/><path d="M6.5 13.5 H4.5 V10.5 H13.5 V13.5 H11.5" fill="#fff" stroke="#242424" stroke-width="1"/><rect x="6.5" y="12.5" width="5" height="3" fill="#fff" stroke="#242424" stroke-width="1"/></svg>
<svg style="left:362px;top:189px" width="13" height="16" viewBox="0 0 13 16"><path d="M3.5 15.5 H0.5 V0.5 H11.5 V7" fill="none" stroke="#242424" stroke-width="1"/><path d="M3.5 4.5 H5.5 V6.5 H3.5 Z M7 5.5 H9" fill="none" stroke="#424242" stroke-width="0.8"/></svg>
<svg style="left:362px;top:189px" width="15" height="16" viewBox="0 0 15 16"><rect x="5.5" y="7.5" width="5" height="3" fill="#fff" stroke="#0f6cbd" stroke-width="1"/><path d="M5.5 13.5 H3.5 V10.5 H12.5 V13.5 H10.5" fill="#fff" stroke="#0f6cbd" stroke-width="1"/><rect x="5.5" y="12.5" width="5" height="3" fill="#fff" stroke="#0f6cbd" stroke-width="1"/></svg>
<svg style="left:388px;top:189px" width="15" height="16" viewBox="0 0 15 16"><path d="M4.5 15.5 H0.5 V0.5 H6.5 L11.5 5.5 V7" fill="none" stroke="#242424" stroke-width="1"/><path d="M6.5 0.5 V5.5 H11.5" fill="none" stroke="#242424" stroke-width="1"/><path d="M2.5 15 V2.5 H6" fill="none" stroke="#0f6cbd" stroke-width="1"/><rect x="6.5" y="7.5" width="5" height="3" fill="#fff" stroke="#242424" stroke-width="1"/><path d="M6.5 13.5 H4.5 V10.5 H13.5 V13.5 H11.5" fill="#fff" stroke="#242424" stroke-width="1"/><rect x="6.5" y="12.5" width="5" height="3" fill="#fff" stroke="#242424" stroke-width="1"/></svg>
<svg style="left:407.5px;top:192.8px" width="8" height="5.0" viewBox="0 0 8 5.0"><path d="M1 1 L4.0 4.0 L7 1" fill="none" stroke="#424242" stroke-width="1.1"/></svg>
<svg style="left:445px;top:189px" width="15" height="17" viewBox="0 0 15 17"><path d="M4 2.5 H1 V16.5 H5" fill="none" stroke="#e07b00" stroke-width="1.2"/><path d="M4.5 4.5 V2.5 H6 V0.5 H9 V2.5 H10.5 V4.5 Z" fill="#fff" stroke="#616161" stroke-width="1"/><path d="M11 2.5 H13.5 V6" fill="none" stroke="#e07b00" stroke-width="1.2"/><rect x="6.5" y="7.5" width="8" height="9" fill="#fff" stroke="#242424" stroke-width="1"/></svg>
<svg style="left:470.5px;top:189px" width="15" height="17" viewBox="0 0 15 17"><path d="M4 2.5 H1 V16.5 H5" fill="none" stroke="#e07b00" stroke-width="1.2"/><path d="M4.5 4.5 V2.5 H6 V0.5 H9 V2.5 H10.5 V4.5 Z" fill="#fff" stroke="#616161" stroke-width="1"/><path d="M11 2.5 H13.5 V6" fill="none" stroke="#e07b00" stroke-width="1.2"/><rect x="6.5" y="7.5" width="8" height="9" fill="#fff" stroke="#242424" stroke-width="1"/></svg>
<svg style="left:490.3px;top:192.8px" width="8" height="5.0" viewBox="0 0 8 5.0"><path d="M1 1 L4.0 4.0 L7 1" fill="none" stroke="#424242" stroke-width="1.1"/></svg>
<svg style="left:512px;top:189px" width="15" height="17" viewBox="0 0 15 17"><path d="M4 2.5 H1 V16.5 H5" fill="none" stroke="#a6a6a6" stroke-width="1.2"/><path d="M4.5 4.5 V2.5 H6 V0.5 H9 V2.5 H10.5 V4.5 Z" fill="#fff" stroke="#616161" stroke-width="1"/><path d="M11 2.5 H13.5 V6" fill="none" stroke="#a6a6a6" stroke-width="1.2"/><text x="3" y="16.5" font-family="Liberation Sans" font-size="8" fill="#a0a0a0">123</text></svg>
<svg style="left:540.5px;top:189px" width="15" height="17" viewBox="0 0 15 17"><path d="M4 2.5 H1 V16.5 H5" fill="none" stroke="#e07b00" stroke-width="1.2"/><path d="M4.5 4.5 V2.5 H6 V0.5 H9 V2.5 H10.5 V4.5 Z" fill="#fff" stroke="#616161" stroke-width="1"/><path d="M11 2.5 H13.5 V6" fill="none" stroke="#e07b00" stroke-width="1.2"/><path d="M6 16 L7 13 L13 7 L15 9 L9 15 Z" fill="#1a86d9" stroke="#242424" stroke-width="0.8"/></svg>
<svg style="left:570px;top:189px" width="15" height="17" viewBox="0 0 15 17"><path d="M4 2.5 H1 V16.5 H5" fill="none" stroke="#a6a6a6" stroke-width="1.2"/><path d="M4.5 4.5 V2.5 H6 V0.5 H9 V2.5 H10.5 V4.5 Z" fill="#fff" stroke="#616161" stroke-width="1"/><path d="M11 2.5 H13.5 V6" fill="none" stroke="#a6a6a6" stroke-width="1.2"/><text x="4" y="16.5" font-family="Liberation Serif" font-style="italic" font-size="9" fill="#a0a0a0">%fx</text></svg>
<svg style="left:598.7px;top:189px" width="15" height="17" viewBox="0 0 15 17"><path d="M4 2.5 H1 V16.5 H5" fill="none" stroke="#a6a6a6" stroke-width="1.2"/><path d="M4.5 4.5 V2.5 H6 V0.5 H9 V2.5 H10.5 V4.5 Z" fill="#fff" stroke="#616161" stroke-width="1"/><path d="M11 2.5 H13.5 V6" fill="none" stroke="#a6a6a6" stroke-width="1.2"/><text x="6" y="16.5" font-family="Liberation Serif" font-style="italic" font-size="10" fill="#a0a0a0">fx</text></svg>
<div class="t" style="left:638.50px;top:189.73px;font-size:13px;color:#424242;font-weight:700;">B</div>
<div class="t" style="left:666.00px;top:189.47px;font-size:12.5px;color:#424242;font-weight:400;">U</div>
<div class="a" style="left:666px;top:204px;width:9px;height:1px;background:#424242"></div>
<svg style="left:683.8px;top:192.8px" width="8" height="5.0" viewBox="0 0 8 5.0"><path d="M1 1 L4.0 4.0 L7 1" fill="none" stroke="#424242" stroke-width="1.1"/></svg>
<svg style="left:702px;top:189px" width="17" height="16" viewBox="0 0 17 16"><path d="M1 8 L6 15 L11 11 L8 5 Z" fill="#f6c08a" stroke="#e06c00" stroke-width="1.3"/><path d="M8 8 L14 2 Q15.5 1 16 2.5 L16.5 3.5 L10.5 10" fill="#fff" stroke="#424242" stroke-width="1.1"/></svg>
<svg style="left:739px;top:189px" width="16" height="16" viewBox="0 0 16 16"><rect x="0" y="0" width="1" height="1" fill="#424242"/><rect x="2" y="0" width="1" height="1" fill="#424242"/><rect x="4" y="0" width="1" height="1" fill="#424242"/><rect x="6" y="0" width="1" height="1" fill="#424242"/><rect x="8" y="0" width="1" height="1" fill="#424242"/><rect x="10" y="0" width="1" height="1" fill="#424242"/><rect x="12" y="0" width="1" height="1" fill="#424242"/><rect x="14" y="0" width="1" height="1" fill="#424242"/><rect x="0" y="8" width="1" height="1" fill="#424242"/><rect x="2" y="8" width="1" height="1" fill="#424242"/><rect x="4" y="8" width="1" height="1" fill="#424242"/><rect x="6" y="8" width="1" height="1" fill="#424242"/><rect x="8" y="8" width="1" height="1" fill="#424242"/><rect x="10" y="8" width="1" height="1" fill="#424242"/><rect x="12" y="8" width="1" height="1" fill="#424242"/><rect x="14" y="8" width="1" height="1" fill="#424242"/><rect x="0" y="0" width="1" height="1" fill="#424242"/><rect x="0" y="2" width="1" height="1" fill="#424242"/><rect x="0" y="4" width="1" height="1" fill="#424242"/><rect x="0" y="6" width="1" height="1" fill="#424242"/><rect x="0" y="8" width="1" height="1" fill="#424242"/><rect x="0" y="10" width="1" height="1" fill="#424242"/><rect x="0" y="12" width="1" height="1" fill="#424242"/><rect x="0" y="14" width="1" height="1" fill="#424242"/><rect x="8" y="0" width="1" height="1" fill="#424242"/><rect x="8" y="2" width="1" height="1" fill="#424242"/><rect x="8" y="4" width="1" height="1" fill="#424242"/><rect x="8" y="6" width="1" height="1" fill="#424242"/><rect x="8" y="8" width="1" height="1" fill="#424242"/><rect x="8" y="10" width="1" height="1" fill="#424242"/><rect x="8" y="12" width="1" height="1" fill="#424242"/><rect x="8" y="14" width="1" height="1" fill="#424242"/><rect x="14" y="0" width="1" height="1" fill="#424242"/><rect x="14" y="2" width="1" height="1" fill="#424242"/><rect x="14" y="4" width="1" height="1" fill="#424242"/><rect x="14" y="6" width="1" height="1" fill="#424242"/><rect x="14" y="8" width="1" height="1" fill="#424242"/><rect x="14" y="10" width="1" height="1" fill="#424242"/><rect x="14" y="12" width="1" height="1" fill="#424242"/><rect x="14" y="14" width="1" height="1" fill="#424242"/><rect x="0" y="15" width="16" height="1.3" fill="#242424"/></svg>
<svg style="left:759.5px;top:192.8px" width="8" height="5.0" viewBox="0 0 8 5.0"><path d="M1 1 L4.0 4.0 L7 1" fill="none" stroke="#424242" stroke-width="1.1"/></svg>
<svg style="left:778px;top:189px" width="16" height="16" viewBox="0 0 16 16"><rect x="0" y="8" width="1" height="1" fill="#424242"/><rect x="2" y="8" width="1" height="1" fill="#424242"/><rect x="4" y="8" width="1" height="1" fill="#424242"/><rect x="6" y="8" width="1" height="1" fill="#424242"/><rect x="8" y="8" width="1" height="1" fill="#424242"/><rect x="10" y="8" width="1" height="1" fill="#424242"/><rect x="12" y="8" width="1" height="1" fill="#424242"/><rect x="14" y="8" width="1" height="1" fill="#424242"/><rect x="0" y="14" width="1" height="1" fill="#424242"/><rect x="2" y="14" width="1" height="1" fill="#424242"/><rect x="4" y="14" width="1" height="1" fill="#424242"/><rect x="6" y="14" width="1" height="1" fill="#424242"/><rect x="8" y="14" width="1" height="1" fill="#424242"/><rect x="10" y="14" width="1" height="1" fill="#424242"/><rect x="12" y="14" width="1" height="1" fill="#424242"/><rect x="14" y="14" width="1" height="1" fill="#424242"/><rect x="0" y="0" width="1" height="1" fill="#424242"/><rect x="0" y="2" width="1" height="1" fill="#424242"/><rect x="0" y="4" width="1" height="1" fill="#424242"/><rect x="0" y="6" width="1" height="1" fill="#424242"/><rect x="0" y="8" width="1" height="1" fill="#424242"/><rect x="0" y="10" width="1" height="1" fill="#424242"/><rect x="0" y="12" width="1" height="1" fill="#424242"/><rect x="0" y="14" width="1" height="1" fill="#424242"/><rect x="8" y="0" width="1" height="1" fill="#424242"/><rect x="8" y="2" width="1" height="1" fill="#424242"/><rect x="8" y="4" width="1" height="1" fill="#424242"/><rect x="8" y="6" width="1" height="1" fill="#424242"/><rect x="8" y="8" width="1" height="1" fill="#424242"/><rect x="8" y="10" width="1" height="1" fill="#424242"/><rect x="8" y="12" width="1" height="1" fill="#424242"/><rect x="8" y="14" width="1" height="1" fill="#424242"/><rect x="14" y="0" width="1" height="1" fill="#424242"/><rect x="14" y="2" width="1" height="1" fill="#424242"/><rect x="14" y="4" width="1" height="1" fill="#424242"/><rect x="14" y="6" width="1" height="1" fill="#424242"/><rect x="14" y="8" width="1" height="1" fill="#424242"/><rect x="14" y="10" width="1" height="1" fill="#424242"/><rect x="14" y="12" width="1" height="1" fill="#424242"/><rect x="14" y="14" width="1" height="1" fill="#424242"/><rect x="0" y="0" width="16" height="1.3" fill="#242424"/></svg>
<svg style="left:807px;top:189px" width="16" height="16" viewBox="0 0 16 16"><rect x="0" y="0" width="1" height="1" fill="#424242"/><rect x="2" y="0" width="1" height="1" fill="#424242"/><rect x="4" y="0" width="1" height="1" fill="#424242"/><rect x="6" y="0" width="1" height="1" fill="#424242"/><rect x="8" y="0" width="1" height="1" fill="#424242"/><rect x="10" y="0" width="1" height="1" fill="#424242"/><rect x="12" y="0" width="1" height="1" fill="#424242"/><rect x="14" y="0" width="1" height="1" fill="#424242"/><rect x="0" y="8" width="1" height="1" fill="#424242"/><rect x="2" y="8" width="1" height="1" fill="#424242"/><rect x="4" y="8" width="1" height="1" fill="#424242"/><rect x="6" y="8" width="1" height="1" fill="#424242"/><rect x="8" y="8" width="1" height="1" fill="#424242"/><rect x="10" y="8" width="1" height="1" fill="#424242"/><rect x="12" y="8" width="1" height="1" fill="#424242"/><rect x="14" y="8" width="1" height="1" fill="#424242"/><rect x="0" y="14" width="1" height="1" fill="#424242"/><rect x="2" y="14" width="1" height="1" fill="#424242"/><rect x="4" y="14" width="1" height="1" fill="#424242"/><rect x="6" y="14" width="1" height="1" fill="#424242"/><rect x="8" y="14" width="1" height="1" fill="#424242"/><rect x="10" y="14" width="1" height="1" fill="#424242"/><rect x="12" y="14" width="1" height="1" fill="#424242"/><rect x="14" y="14" width="1" height="1" fill="#424242"/><rect x="0" y="0" width="1" height="1" fill="#424242"/><rect x="0" y="2" width="1" height="1" fill="#424242"/><rect x="0" y="4" width="1" height="1" fill="#424242"/><rect x="0" y="6" width="1" height="1" fill="#424242"/><rect x="0" y="8" width="1" height="1" fill="#424242"/><rect x="0" y="10" width="1" height="1" fill="#424242"/><rect x="0" y="12" width="1" height="1" fill="#424242"/><rect x="0" y="14" width="1" height="1" fill="#424242"/><rect x="8" y="0" width="1" height="1" fill="#424242"/><rect x="8" y="2" width="1" height="1" fill="#424242"/><rect x="8" y="4" width="1" height="1" fill="#424242"/><rect x="8" y="6" width="1" height="1" fill="#424242"/><rect x="8" y="8" width="1" height="1" fill="#424242"/><rect x="8" y="10" width="1" height="1" fill="#424242"/><rect x="8" y="12" width="1" height="1" fill="#424242"/><rect x="8" y="14" width="1" height="1" fill="#424242"/><rect x="14" y="0" width="1" height="1" fill="#424242"/><rect x="14" y="2" width="1" height="1" fill="#424242"/><rect x="14" y="4" width="1" height="1" fill="#424242"/><rect x="14" y="6" width="1" height="1" fill="#424242"/><rect x="14" y="8" width="1" height="1" fill="#424242"/><rect x="14" y="10" width="1" height="1" fill="#424242"/><rect x="14" y="12" width="1" height="1" fill="#424242"/><rect x="14" y="14" width="1" height="1" fill="#424242"/></svg>
<svg style="left:844px;top:187px" width="17" height="18" viewBox="0 0 17 18"><path d="M6.5 4.8 L2.8 8.6 L7 12.8 L11.5 8.3" fill="#fff" stroke="#242424" stroke-width="1.1" stroke-linejoin="round"/><path d="M7.3 7.3 V3 Q8.6 1.5 9.6 3 V8" fill="none" stroke="#242424" stroke-width="1.1"/><path d="M12 5.7 Q14.2 6 13.7 11.5" fill="none" stroke="#1a76c9" stroke-width="1.5"/><rect x="0" y="14" width="16" height="3.5" fill="#ffff00"/></svg>
<svg style="left:864.5px;top:192.8px" width="8" height="5.0" viewBox="0 0 8 5.0"><path d="M1 1 L4.0 4.0 L7 1" fill="none" stroke="#424242" stroke-width="1.1"/></svg>
<svg style="left:886px;top:188px" width="11" height="12" viewBox="0 0 11 12"><path d="M1 11.5 L5 0.8 L9.5 11.5 M2.6 7.5 H8" fill="none" stroke="#242424" stroke-width="1.1"/></svg>
<div class="a" style="left:883px;top:201px;width:16px;height:4px;background:#c00000"></div>
<svg style="left:903.8px;top:192.8px" width="8" height="5.0" viewBox="0 0 8 5.0"><path d="M1 1 L4.0 4.0 L7 1" fill="none" stroke="#424242" stroke-width="1.1"/></svg>
<div class="a" style="left:924px;top:180px;width:28px;height:30px;background:#e8e8e8;border:1px solid #6e6e6e;border-radius:4px"></div>
<svg style="left:931px;top:190px" width="14" height="16" viewBox="0 0 14 16"><path d="M0.0 0.5 H14.0" stroke="#424242" stroke-width="1"/><path d="M2.0 4.5 H12.0" stroke="#424242" stroke-width="1"/><path d="M0.0 8.5 H14.0" stroke="#424242" stroke-width="1"/><path d="M2.0 12.5 H12.0" stroke="#424242" stroke-width="1"/></svg>
<svg style="left:958px;top:189px" width="16" height="16" viewBox="0 0 16 16"><rect x="0.5" y="0.5" width="15" height="15" fill="#fff" stroke="#0f6cbd" stroke-width="1"/><path d="M0.5 4.5 H15.5 M0.5 11.5 H15.5" stroke="#0f6cbd" stroke-width="1"/><path d="M3 8 H12 M10 6 L12 8 L10 10" fill="none" stroke="#0f6cbd" stroke-width="1.1"/></svg>
<svg style="left:987px;top:189px" width="16" height="16" viewBox="0 0 16 16"><rect x="0.5" y="0.5" width="15" height="15" fill="#fff" stroke="#242424" stroke-width="1"/><path d="M0.5 5.5 H15.5 M0.5 10.5 H15.5 M5.5 0.5 V5.5 M10.5 0.5 V5.5 M5.5 10.5 V15.5 M10.5 10.5 V15.5" stroke="#242424" stroke-width="1"/><rect x="1" y="6" width="14" height="4" fill="#7ab8ec"/><path d="M5.5 6 V10 M10.5 6 V10" stroke="#0f6cbd" stroke-width="1"/></svg>
<div class="t" style="left:1027.00px;top:188.53px;font-size:15.5px;color:#424242;font-weight:400;">$</div>
<svg style="left:1045.3px;top:192.8px" width="8" height="5.0" viewBox="0 0 8 5.0"><path d="M1 1 L4.0 4.0 L7 1" fill="none" stroke="#424242" stroke-width="1.1"/></svg>
<div class="t" style="left:1063.50px;top:188.77px;font-size:15px;color:#424242;font-weight:400;">%</div>
<svg style="left:1097px;top:189px" width="8" height="13" viewBox="0 0 8 13"><circle cx="4" cy="4" r="3" fill="#424242"/><path d="M6.5 5 Q6.5 10 2 12.5" fill="none" stroke="#424242" stroke-width="1.6"/></svg>
<svg style="left:1122px;top:188px" width="17" height="17" viewBox="0 0 17 17"><text x="7" y="7.5" font-family="Liberation Sans" font-size="9" fill="#424242">0</text><text x="2" y="16" font-family="Liberation Sans" font-size="9" fill="#424242">.00</text><path d="M7 4 H1 M3.5 1.5 L1 4 L3.5 6.5" fill="none" stroke="#0f6cbd" stroke-width="1.1"/></svg>
<svg style="left:1151px;top:188px" width="17" height="17" viewBox="0 0 17 17"><text x="2" y="7.5" font-family="Liberation Sans" font-size="9" fill="#424242">.00</text><text x="8" y="16" font-family="Liberation Sans" font-size="9" fill="#424242">0</text><path d="M0 12 H8 M5.5 9.5 L8 12 L5.5 14.5" fill="none" stroke="#0f6cbd" stroke-width="1.1"/></svg>
<svg style="left:1187px;top:187px" width="10" height="18" viewBox="0 0 10 18"><text x="0" y="8" font-family="Liberation Sans" font-weight="700" font-size="9" fill="#1a86d9">A</text><text x="0" y="17" font-family="Liberation Sans" font-size="9.5" fill="#242424">Z</text></svg>
<svg style="left:1195px;top:188px" width="10" height="17" viewBox="0 0 10 17"><path d="M5 0.5 V16 M1 12 L5 16 L9 12" fill="none" stroke="#424242" stroke-width="1.1"/></svg>
<svg style="left:1220px;top:193px" width="10" height="7" viewBox="0 0 10 7"><path d="M1 1 L3.5 3.5 L1 6 M5.5 1 L8 3.5 L5.5 6" fill="none" stroke="#424242" stroke-width="1.1"/></svg>
<div class="a" style="left:8px;top:221px;width:189px;height:26px;background:#fff;border:1px solid #d1d1d1;border-radius:5px"></div>
<div class="t" style="left:15.00px;top:228.47px;font-size:12.5px;color:#242424;font-weight:400;">A1</div>
<svg style="left:179.5px;top:231.0px" width="12" height="7.0" viewBox="0 0 12 7.0"><path d="M1 1 L6.0 6.0 L11 1" fill="none" stroke="#424242" stroke-width="1.2"/></svg>
<div class="a" style="left:206px;top:229px;width:2px;height:2px;background:#424242;border-radius:1px"></div>
<div class="a" style="left:206px;top:233.5px;width:2px;height:2px;background:#424242;border-radius:1px"></div>
<div class="a" style="left:206px;top:238px;width:2px;height:2px;background:#424242;border-radius:1px"></div>
<div class="a" style="left:217px;top:221px;width:86px;height:26px;background:#fff;border:1px solid #d1d1d1;border-radius:5px"></div>
<svg style="left:223px;top:228px" width="14" height="14" viewBox="0 0 14 14"><path d="M1 1 L13 13 M13 1 L1 13" stroke="#b0b0b0" stroke-width="1.1" fill="none"/></svg>
<svg style="left:246px;top:228px" width="17" height="13" viewBox="0 0 17 13"><path d="M1 7 L6 12 L16 1" stroke="#b0b0b0" stroke-width="1.1" fill="none"/></svg>
<div class="t" style="left:271px;top:226px;font-family:'Liberation Serif',serif;font-style:italic;font-size:16px;color:#242424">fx</div>
<svg style="left:290.0px;top:231.25px" width="11" height="6.5" viewBox="0 0 11 6.5"><path d="M1 1 L5.5 5.5 L10 1" fill="none" stroke="#616161" stroke-width="1.0"/></svg>
<div class="a" style="left:307px;top:221px;width:965px;height:46px;background:#fff;border:1px solid #d1d1d1;border-radius:6px"></div>
<div class="t" style="left:318.00px;top:227.99px;font-size:13.5px;color:#242424;font-weight:400;">API jetCubeInc/finReports/v1.0/glDetailsRec</div>
<svg style="left:1257px;top:228px" width="11" height="7" viewBox="0 0 11 7"><path d="M1 6 L5.5 1 L10 6" stroke="#242424" stroke-width="1.2" fill="none"/></svg>
<div class="a" style="left:25px;top:294px;width:1233px;height:371px;background:#fff"></div>
<div class="a" style="left:25px;top:274px;width:1233px;height:19px;background:#f0f0f0"></div>
<div class="a" style="left:25px;top:274px;width:567px;height:19px;background:#d3d3d3"></div>
<div class="a" style="left:25px;top:293px;width:1233px;height:1px;background:#bdbdbd"></div>
<div class="a" style="left:0px;top:274px;width:25px;height:391px;background:#f0f0f0"></div>
<div class="a" style="left:0px;top:293px;width:25px;height:20px;background:#d3d3d3"></div>
<div class="a" style="left:25px;top:274px;width:1px;height:391px;background:#bdbdbd"></div>
<svg style="left:10px;top:278px" width="12" height="12" viewBox="0 0 12 12"><path d="M12 0 L12 12 L0 12 Z" fill="#c4c4c4"/></svg>
<div class="a" style="left:168px;top:274px;width:1px;height:19px;background:#c6c6c6"></div>
<div class="t" style="left:25px;width:143px;text-align:center;top:278px;font-size:13px;color:#1d6b3f">A</div>
<div class="a" style="left:322px;top:274px;width:1px;height:19px;background:#c6c6c6"></div>
<div class="t" style="left:168px;width:154px;text-align:center;top:278px;font-size:13px;color:#1d6b3f">B</div>
<div class="a" style="left:489px;top:274px;width:1px;height:19px;background:#c6c6c6"></div>
<div class="t" style="left:322px;width:167px;text-align:center;top:278px;font-size:13px;color:#1d6b3f">C</div>
<div class="a" style="left:592px;top:274px;width:1px;height:19px;background:#c6c6c6"></div>
<div class="t" style="left:489px;width:103px;text-align:center;top:278px;font-size:13px;color:#1d6b3f">D</div>
<div class="a" style="left:656px;top:274px;width:1px;height:19px;background:#c6c6c6"></div>
<div class="t" style="left:592px;width:64px;text-align:center;top:278px;font-size:13px;color:#242424">E</div>
<div class="a" style="left:720px;top:274px;width:1px;height:19px;background:#c6c6c6"></div>
<div class="t" style="left:656px;width:64px;text-align:center;top:278px;font-size:13px;color:#242424">F</div>
<div class="a" style="left:784px;top:274px;width:1px;height:19px;background:#c6c6c6"></div>
<div class="t" style="left:720px;width:64px;text-align:center;top:278px;font-size:13px;color:#242424">G</div>
<div class="a" style="left:848px;top:274px;width:1px;height:19px;background:#c6c6c6"></div>
<div class="t" style="left:784px;width:64px;text-align:center;top:278px;font-size:13px;color:#242424">H</div>
<div class="a" style="left:912px;top:274px;width:1px;height:19px;background:#c6c6c6"></div>
<div class="t" style="left:848px;width:64px;text-align:center;top:278px;font-size:13px;color:#242424">I</div>
<div class="a" style="left:976px;top:274px;width:1px;height:19px;background:#c6c6c6"></div>
<div class="t" style="left:912px;width:64px;text-align:center;top:278px;font-size:13px;color:#242424">J</div>
<div class="a" style="left:1040px;top:274px;width:1px;height:19px;background:#c6c6c6"></div>
<div class="t" style="left:976px;width:64px;text-align:center;top:278px;font-size:13px;color:#242424">K</div>
<div class="a" style="left:1104px;top:274px;width:1px;height:19px;background:#c6c6c6"></div>
<div class="t" style="left:1040px;width:64px;text-align:center;top:278px;font-size:13px;color:#242424">L</div>
<div class="a" style="left:1168px;top:274px;width:1px;height:19px;background:#c6c6c6"></div>
<div class="t" style="left:1104px;width:64px;text-align:center;top:278px;font-size:13px;color:#242424">M</div>
<div class="a" style="left:1232px;top:274px;width:1px;height:19px;background:#c6c6c6"></div>
<div class="t" style="left:1168px;width:64px;text-align:center;top:278px;font-size:13px;color:#242424">N</div>
<div class="a" style="left:168px;top:294px;width:1px;height:371px;background:#e1e1e1"></div>
<div class="a" style="left:322px;top:294px;width:1px;height:371px;background:#e1e1e1"></div>
<div class="a" style="left:489px;top:294px;width:1px;height:371px;background:#e1e1e1"></div>
<div class="a" style="left:592px;top:294px;width:1px;height:371px;background:#e1e1e1"></div>
<div class="a" style="left:656px;top:294px;width:1px;height:371px;background:#e1e1e1"></div>
<div class="a" style="left:720px;top:294px;width:1px;height:371px;background:#e1e1e1"></div>
<div class="a" style="left:784px;top:294px;width:1px;height:371px;background:#e1e1e1"></div>
<div class="a" style="left:848px;top:294px;width:1px;height:371px;background:#e1e1e1"></div>
<div class="a" style="left:912px;top:294px;width:1px;height:371px;background:#e1e1e1"></div>
<div class="a" style="left:976px;top:294px;width:1px;height:371px;background:#e1e1e1"></div>
<div class="a" style="left:1040px;top:294px;width:1px;height:371px;background:#e1e1e1"></div>
<div class="a" style="left:1104px;top:294px;width:1px;height:371px;background:#e1e1e1"></div>
<div class="a" style="left:1168px;top:294px;width:1px;height:371px;background:#e1e1e1"></div>
<div class="a" style="left:1232px;top:294px;width:1px;height:371px;background:#e1e1e1"></div>
<div class="a" style="left:26px;top:313px;width:1232px;height:1px;background:#e1e1e1"></div>
<div class="a" style="left:0px;top:313px;width:25px;height:1px;background:#c6c6c6"></div>
<div class="t" style="left:0;width:25px;text-align:center;top:297.5px;font-size:13px;color:#1d6b3f">1</div>
<div class="a" style="left:26px;top:333px;width:1232px;height:1px;background:#e1e1e1"></div>
<div class="a" style="left:0px;top:333px;width:25px;height:1px;background:#c6c6c6"></div>
<div class="t" style="left:0;width:25px;text-align:center;top:317.5px;font-size:13px;color:#242424">2</div>
<div class="a" style="left:26px;top:353px;width:1232px;height:1px;background:#e1e1e1"></div>
<div class="a" style="left:0px;top:353px;width:25px;height:1px;background:#c6c6c6"></div>
<div class="t" style="left:0;width:25px;text-align:center;top:337.5px;font-size:13px;color:#242424">3</div>
<div class="a" style="left:26px;top:373px;width:1232px;height:1px;background:#e1e1e1"></div>
<div class="a" style="left:0px;top:373px;width:25px;height:1px;background:#c6c6c6"></div>
<div class="t" style="left:0;width:25px;text-align:center;top:357.5px;font-size:13px;color:#242424">4</div>
<div class="a" style="left:26px;top:393px;width:1232px;height:1px;background:#e1e1e1"></div>
<div class="a" style="left:0px;top:393px;width:25px;height:1px;background:#c6c6c6"></div>
<div class="t" style="left:0;width:25px;text-align:center;top:377.5px;font-size:13px;color:#242424">5</div>
<div class="a" style="left:26px;top:413px;width:1232px;height:1px;background:#e1e1e1"></div>
<div class="a" style="left:0px;top:413px;width:25px;height:1px;background:#c6c6c6"></div>
<div class="t" style="left:0;width:25px;text-align:center;top:397.5px;font-size:13px;color:#242424">6</div>
<div class="a" style="left:26px;top:433px;width:1232px;height:1px;background:#e1e1e1"></div>
<div class="a" style="left:0px;top:433px;width:25px;height:1px;background:#c6c6c6"></div>
<div class="t" style="left:0;width:25px;text-align:center;top:417.5px;font-size:13px;color:#242424">7</div>
<div class="a" style="left:26px;top:453px;width:1232px;height:1px;background:#e1e1e1"></div>
<div class="a" style="left:0px;top:453px;width:25px;height:1px;background:#c6c6c6"></div>
<div class="t" style="left:0;width:25px;text-align:center;top:437.5px;font-size:13px;color:#242424">8</div>
<div class="a" style="left:26px;top:473px;width:1232px;height:1px;background:#e1e1e1"></div>
<div class="a" style="left:0px;top:473px;width:25px;height:1px;background:#c6c6c6"></div>
<div class="t" style="left:0;width:25px;text-align:center;top:457.5px;font-size:13px;color:#242424">9</div>
<div class="a" style="left:26px;top:493px;width:1232px;height:1px;background:#e1e1e1"></div>
<div class="a" style="left:0px;top:493px;width:25px;height:1px;background:#c6c6c6"></div>
<div class="t" style="left:0;width:25px;text-align:center;top:477.5px;font-size:13px;color:#242424">10</div>
<div class="a" style="left:26px;top:513px;width:1232px;height:1px;background:#e1e1e1"></div>
<div class="a" style="left:0px;top:513px;width:25px;height:1px;background:#c6c6c6"></div>
<div class="t" style="left:0;width:25px;text-align:center;top:497.5px;font-size:13px;color:#242424">11</div>
<div class="a" style="left:26px;top:533px;width:1232px;height:1px;background:#e1e1e1"></div>
<div class="a" style="left:0px;top:533px;width:25px;height:1px;background:#c6c6c6"></div>
<div class="t" style="left:0;width:25px;text-align:center;top:517.5px;font-size:13px;color:#242424">12</div>
<div class="a" style="left:26px;top:553px;width:1232px;height:1px;background:#e1e1e1"></div>
<div class="a" style="left:0px;top:553px;width:25px;height:1px;background:#c6c6c6"></div>
<div class="t" style="left:0;width:25px;text-align:center;top:537.5px;font-size:13px;color:#242424">13</div>
<div class="a" style="left:26px;top:573px;width:1232px;height:1px;background:#e1e1e1"></div>
<div class="a" style="left:0px;top:573px;width:25px;height:1px;background:#c6c6c6"></div>
<div class="t" style="left:0;width:25px;text-align:center;top:557.5px;font-size:13px;color:#242424">14</div>
<div class="a" style="left:26px;top:593px;width:1232px;height:1px;background:#e1e1e1"></div>
<div class="a" style="left:0px;top:593px;width:25px;height:1px;background:#c6c6c6"></div>
<div class="t" style="left:0;width:25px;text-align:center;top:577.5px;font-size:13px;color:#242424">15</div>
<div class="a" style="left:26px;top:613px;width:1232px;height:1px;background:#e1e1e1"></div>
<div class="a" style="left:0px;top:613px;width:25px;height:1px;background:#c6c6c6"></div>
<div class="t" style="left:0;width:25px;text-align:center;top:597.5px;font-size:13px;color:#242424">16</div>
<div class="a" style="left:26px;top:633px;width:1232px;height:1px;background:#e1e1e1"></div>
<div class="a" style="left:0px;top:633px;width:25px;height:1px;background:#c6c6c6"></div>
<div class="t" style="left:0;width:25px;text-align:center;top:617.5px;font-size:13px;color:#242424">17</div>
<div class="a" style="left:26px;top:653px;width:1232px;height:1px;background:#e1e1e1"></div>
<div class="a" style="left:0px;top:653px;width:25px;height:1px;background:#c6c6c6"></div>
<div class="t" style="left:0;width:25px;text-align:center;top:637.5px;font-size:13px;color:#242424">18</div>
<div class="t" style="left:0;width:25px;text-align:center;top:657.5px;font-size:13px;color:#242424">19</div>
<div class="a" style="left:25px;top:393px;width:144px;height:21px;background:#ffff00"></div>
<div class="a" style="left:25px;top:473px;width:144px;height:21px;background:#ffff00"></div>
<div class="a" style="left:25px;top:533px;width:144px;height:21px;background:#ffff00"></div>
<div class="a" style="left:25px;top:553px;width:144px;height:21px;background:#ffff00"></div>
<div class="a" style="left:25px;top:573px;width:144px;height:21px;background:#ffff00"></div>
<div class="a" style="left:168px;top:313px;width:155px;height:21px;background:#ffff00"></div>
<div class="a" style="left:168px;top:333px;width:155px;height:21px;background:#ffff00"></div>
<div class="a" style="left:168px;top:353px;width:155px;height:21px;background:#ffff00"></div>
<div class="a" style="left:168px;top:373px;width:155px;height:21px;background:#ffff00"></div>
<div class="a" style="left:322px;top:453px;width:168px;height:21px;background:#ffff00"></div>
<div class="a" style="left:322px;top:473px;width:168px;height:21px;background:#ffff00"></div>
<div class="a" style="left:322px;top:493px;width:168px;height:21px;background:#ffff00"></div>
<div class="a" style="left:322px;top:513px;width:168px;height:21px;background:#ffff00"></div>
<div class="a" style="left:322px;top:533px;width:168px;height:21px;background:#ffff00"></div>
<div class="a" style="left:322px;top:553px;width:168px;height:21px;background:#ffff00"></div>
<div class="a" style="left:322px;top:573px;width:168px;height:21px;background:#ffff00"></div>
<div class="a" style="left:322px;top:593px;width:168px;height:21px;background:#ffff00"></div>
<div class="a" style="left:489px;top:333px;width:104px;height:21px;background:#ffff00"></div>
<div class="t" style="left:28.50px;top:316.90px;font-size:14px;color:#000;font-weight:400;">systemId</div>
<div class="t" style="left:28.50px;top:336.90px;font-size:14px;color:#000;font-weight:400;">entryNo</div>
<div class="t" style="left:28.50px;top:356.90px;font-size:14px;color:#000;font-weight:400;">transactionNo</div>
<div class="t" style="left:28.50px;top:376.90px;font-size:14px;color:#000;font-weight:400;">postingDate</div>
<div class="t" style="left:28.50px;top:396.90px;font-size:14px;color:#000;font-weight:400;">postingPeriod</div>
<div class="t" style="left:28.50px;top:416.90px;font-size:14px;color:#000;font-weight:400;">documentType</div>
<div class="t" style="left:28.50px;top:436.90px;font-size:14px;color:#000;font-weight:400;">documentNo</div>
<div class="t" style="left:28.50px;top:456.90px;font-size:14px;color:#000;font-weight:400;">documentDate</div>
<div class="t" style="left:28.50px;top:476.90px;font-size:14px;color:#000;font-weight:400;">glAccountNo</div>
<div class="t" style="left:28.50px;top:496.90px;font-size:14px;color:#000;font-weight:400;">description</div>
<div class="t" style="left:28.50px;top:516.90px;font-size:14px;color:#000;font-weight:400;">comment</div>
<div class="t" style="left:28.50px;top:536.90px;font-size:14px;color:#000;font-weight:400;">sourceType</div>
<div class="t" style="left:28.50px;top:556.90px;font-size:14px;color:#000;font-weight:400;">sourceNo</div>
<div class="t" style="left:28.50px;top:576.90px;font-size:14px;color:#000;font-weight:400;">sourceCode</div>
<div class="t" style="left:28.50px;top:596.90px;font-size:14px;color:#000;font-weight:400;">externalDocumentNo</div>
<div class="t" style="left:171.50px;top:316.90px;font-size:14px;color:#000;font-weight:400;">dimensionSetID</div>
<div class="t" style="left:171.50px;top:336.90px;font-size:14px;color:#000;font-weight:400;">globalDimension1Code</div>
<div class="t" style="left:171.50px;top:356.90px;font-size:14px;color:#000;font-weight:400;">globalDimension2Code</div>
<div class="t" style="left:171.50px;top:376.90px;font-size:14px;color:#000;font-weight:400;">businessUnitCode</div>
<div class="t" style="left:171.50px;top:396.90px;font-size:14px;color:#000;font-weight:400;">reversed</div>
<div class="t" style="left:171.50px;top:416.90px;font-size:14px;color:#000;font-weight:400;">systemCreatedEntry</div>
<div class="t" style="left:171.50px;top:436.90px;font-size:14px;color:#000;font-weight:400;">priorYearEntry</div>
<div class="t" style="left:171.50px;top:456.90px;font-size:14px;color:#000;font-weight:400;">jobNo</div>
<div class="t" style="left:171.50px;top:476.90px;font-size:14px;color:#000;font-weight:400;">quantity</div>
<div class="t" style="left:171.50px;top:496.90px;font-size:14px;color:#000;font-weight:400;">journalBatchName</div>
<div class="t" style="left:171.50px;top:516.90px;font-size:14px;color:#000;font-weight:400;">reasonCode</div>
<div class="t" style="left:171.50px;top:536.90px;font-size:14px;color:#000;font-weight:400;">userID</div>
<div class="t" style="left:171.50px;top:556.90px;font-size:14px;color:#000;font-weight:400;">lastModifiedDateTime</div>
<div class="t" style="left:171.50px;top:576.90px;font-size:14px;color:#000;font-weight:400;">systemCreatedBy</div>
<div class="t" style="left:171.50px;top:596.90px;font-size:14px;color:#000;font-weight:400;">systemCreatedAt</div>
<div class="t" style="left:325.50px;top:316.90px;font-size:14px;color:#000;font-weight:400;">systemModifiedBy</div>
<div class="t" style="left:325.50px;top:336.90px;font-size:14px;color:#000;font-weight:400;">systemModifiedAt</div>
<div class="t" style="left:325.50px;top:356.90px;font-size:14px;color:#000;font-weight:400;">vatAmount</div>
<div class="t" style="left:325.50px;top:376.90px;font-size:14px;color:#000;font-weight:400;">debitAmount</div>
<div class="t" style="left:325.50px;top:396.90px;font-size:14px;color:#000;font-weight:400;">creditAmount</div>
<div class="t" style="left:325.50px;top:416.90px;font-size:14px;color:#000;font-weight:400;">amount</div>
<div class="t" style="left:325.50px;top:436.90px;font-size:14px;color:#000;font-weight:400;">glAccountId</div>
<div class="t" style="left:325.50px;top:456.90px;font-size:14px;color:#000;font-weight:400;">glAccountName</div>
<div class="t" style="left:325.50px;top:476.90px;font-size:14px;color:#000;font-weight:400;">shortcutDimension3Code</div>
<div class="t" style="left:325.50px;top:496.90px;font-size:14px;color:#000;font-weight:400;">shortcutDimension4Code</div>
<div class="t" style="left:325.50px;top:516.90px;font-size:14px;color:#000;font-weight:400;">shortcutDimension5Code</div>
<div class="t" style="left:325.50px;top:536.90px;font-size:14px;color:#000;font-weight:400;">shortcutDimension6Code</div>
<div class="t" style="left:325.50px;top:556.90px;font-size:14px;color:#000;font-weight:400;">shortcutDimension7Code</div>
<div class="t" style="left:325.50px;top:576.90px;font-size:14px;color:#000;font-weight:400;">shortcutDimension8Code</div>
<div class="t" style="left:325.50px;top:596.90px;font-size:14px;color:#000;font-weight:400;">vendorName</div>
<div class="t" style="left:492.50px;top:316.90px;font-size:14px;color:#000;font-weight:400;">vendorRecID</div>
<div class="t" style="left:492.50px;top:336.90px;font-size:14px;color:#000;font-weight:400;">customerName</div>
<div class="t" style="left:492.50px;top:356.90px;font-size:14px;color:#000;font-weight:400;">customerRecID</div>
<div class="a" style="left:26px;top:294px;width:566px;height:19px;background:#fff"></div>
<div class="t" style="left:172.50px;top:296.90px;font-size:14px;color:#c00000;font-weight:400;">API jetCubeInc/finReports/v1.0/glDetailsRec</div>
<div class="a" style="left:24px;top:292px;width:570px;height:23px;border:2px solid #136c3a"></div>
<div class="a" style="left:589px;top:310px;width:8px;height:8px;background:#136c3a;border:1px solid #fff"></div>
<div class="a" style="left:1258px;top:274px;width:22px;height:391px;background:#f0f0f0"></div>
<div class="a" style="left:1260px;top:274px;width:18px;height:394px;background:#f6f6f6;border-radius:9px"></div>
<svg style="left:1265px;top:279px" width="9" height="7" viewBox="0 0 9 7"><path d="M4.5 0 L9 7 L0 7 Z" fill="#6e6e6e"/></svg>
<div class="a" style="left:1265px;top:291px;width:9px;height:316px;background:#757575;border-radius:4.5px"></div>
<svg style="left:1265px;top:656px" width="9" height="7" viewBox="0 0 9 7"><path d="M0 0 L9 0 L4.5 7 Z" fill="#6e6e6e"/></svg>
<div class="a" style="left:0px;top:665px;width:1280px;height:33px;background:#f0f0f0"></div>
<svg style="left:28px;top:676px" width="8" height="10" viewBox="0 0 8 10"><path d="M6.5 1 L1.5 5 L6.5 9" fill="none" stroke="#424242" stroke-width="1.1"/></svg>
<svg style="left:61px;top:676px" width="8" height="10" viewBox="0 0 8 10"><path d="M1.5 1 L6.5 5 L1.5 9" fill="none" stroke="#a0a0a0" stroke-width="1.1"/></svg>
<div class="a" style="left:90px;top:679.5px;width:3px;height:3px;background:#424242;border-radius:50%"></div>
<div class="a" style="left:94.5px;top:679.5px;width:3px;height:3px;background:#424242;border-radius:50%"></div>
<div class="a" style="left:99px;top:679.5px;width:3px;height:3px;background:#424242;border-radius:50%"></div>
<div class="t" style="left:125.00px;top:674.64px;font-size:13.2px;color:#242424;font-weight:400;">GLImportsRecGDO</div>
<div class="a" style="left:255px;top:673px;width:1px;height:16px;background:#d1d1d1"></div>
<div class="t" style="left:269.00px;top:674.64px;font-size:13.2px;color:#242424;font-weight:400;">GLImportsRec</div>
<div class="a" style="left:370px;top:673px;width:1px;height:16px;background:#d1d1d1"></div>
<div class="a" style="left:360px;top:665px;width:127px;height:8px;background:#fff"></div>
<div class="a" style="left:358px;top:665px;width:15px;height:30px;background:#f0f0f0;border-top-right-radius:7px"></div>
<div class="a" style="left:370px;top:673px;width:1px;height:16px;background:#d1d1d1"></div>
<div class="a" style="left:474px;top:665px;width:15px;height:30px;background:#f0f0f0;border-top-left-radius:7px"></div>
<div class="a" style="left:476px;top:673px;width:1px;height:16px;background:#d1d1d1"></div>
<div class="a" style="left:373px;top:665px;width:101px;height:28px;background:#fff;border-radius:0 0 6px 6px;border:1px solid #e0e0e0;border-top:none"></div>
<div class="a" style="left:374px;top:665px;width:99px;height:6px;background:#fff"></div>
<div class="t" style="left:382.00px;top:671.78px;font-size:12.9px;color:#242424;font-weight:400;-webkit-text-stroke:0.45px #242424;letter-spacing:0.15px">GLDetailsRec</div>
<div class="a" style="left:382px;top:688px;width:83px;height:2px;background:#107c41;border-radius:1px"></div>
<div class="a" style="left:476px;top:673px;width:1px;height:16px;background:#d1d1d1"></div>
<div class="t" style="left:492.00px;top:674.64px;font-size:13.2px;color:#242424;font-weight:400;">GLDetailsFull</div>
<div class="a" style="left:584px;top:673px;width:1px;height:16px;background:#d1d1d1"></div>
<svg style="left:626px;top:674px" width="12" height="12" viewBox="0 0 12 12"><path d="M6 0.5 V11.5 M0.5 6 H11.5" stroke="#424242" stroke-width="0.9"/></svg>
<div class="a" style="left:769.5px;top:677px;width:2px;height:2px;background:#424242;border-radius:1px"></div>
<div class="a" style="left:769.5px;top:681px;width:2px;height:2px;background:#424242;border-radius:1px"></div>
<div class="a" style="left:769.5px;top:685px;width:2px;height:2px;background:#424242;border-radius:1px"></div>
<div class="a" style="left:787px;top:670px;width:474px;height:20px;background:#f7f7f7;border-radius:10px"></div>
<svg style="left:792px;top:676px" width="7" height="9" viewBox="0 0 7 9"><path d="M7 0 V9 L0 4.5 Z" fill="#6e6e6e"/></svg>
<div class="a" style="left:803px;top:676px;width:427px;height:9px;background:#757575;border-radius:4.5px"></div>
<svg style="left:1249px;top:676px" width="7" height="9" viewBox="0 0 7 9"><path d="M0 0 V9 L7 4.5 Z" fill="#6e6e6e"/></svg>
<div class="a" style="left:0px;top:697px;width:1280px;height:1px;background:#d9d9d9"></div>
<div class="a" style="left:0px;top:698px;width:1280px;height:20px;background:#f3f3f3"></div>
<div class="a" style="left:0px;top:718px;width:1280px;height:2px;background:#1f1f1f"></div>
<div class="t" style="left:11.25px;top:704.29px;font-size:10.8px;color:#242424;font-weight:400;">Ready</div>
<div class="t" style="left:58.00px;top:703.96px;font-size:11.5px;color:#242424;font-weight:400;">Workbook Statistics</div>
<div class="t" style="left:180.50px;top:704.20px;font-size:11px;color:#242424;font-weight:400;">Num Lock</div>
<svg style="left:247px;top:702px" width="15" height="14" viewBox="0 0 15 14"><path d="M5 11.5 H0.5 V0.5 H13.5 V6 M0.5 2.5 H13.5 M2.5 4.5 H4.5 M2.5 6.5 H4.5 M2.5 8.5 H4.5" fill="none" stroke="#242424" stroke-width="1"/><circle cx="9.4" cy="8.6" r="3.7" fill="#f3f3f3" stroke="#242424" stroke-width="1"/><rect x="8.4" y="7.6" width="2" height="2" fill="#242424"/></svg>
<svg style="left:278px;top:700px" width="17" height="16" viewBox="0 0 17 16"><circle cx="7" cy="3" r="1.7" fill="none" stroke="#242424" stroke-width="1"/><path d="M5.2 4.8 Q3 3.5 2 4.5 Q1.3 5.8 3.5 6.2 L4.8 6.5 Q4.3 10 4 12.5 Q3.8 14.5 5.5 14.5 M8.8 4.8 Q11 3.5 12 4.5 Q12.7 5.8 10.5 6.2 L9.2 6.5 V9" fill="none" stroke="#242424" stroke-width="1"/><path d="M7.5 11.5 L10.3 14.3 L15.5 9.2" fill="none" stroke="#242424" stroke-width="1"/></svg>
<div class="t" style="left:297.50px;top:703.96px;font-size:11.5px;color:#242424;font-weight:400;">Accessibility: Good to go</div>
<div class="a" style="left:980px;top:698px;width:39px;height:20px;background:#dcdcdc"></div>
<svg style="left:993px;top:702px" width="14" height="13" viewBox="0 0 14 13"><path d="M0.5 0.5 H13.5 V12.5 H0.5 Z M0.5 4.5 H13.5 M0.5 8.5 H13.5 M4.5 0.5 V12.5 M9.5 0.5 V12.5" fill="none" stroke="#242424" stroke-width="1"/></svg>
<svg style="left:1033px;top:702px" width="14" height="13" viewBox="0 0 14 13"><rect x="0.5" y="0.5" width="13" height="12" fill="none" stroke="#242424" stroke-width="1"/><rect x="3.5" y="3" width="7" height="7" fill="none" stroke="#242424" stroke-width="1"/><path d="M5 5 H9 M5 6.5 H9 M5 8 H9" stroke="#242424" stroke-width="0.8"/></svg>
<svg style="left:1073px;top:702px" width="14" height="13" viewBox="0 0 14 13"><path d="M0.5 0.5 H13.5 V12.5 H0.5 Z M6.5 0.5 V7.5 H0.5" fill="none" stroke="#242424" stroke-width="1"/></svg>
<div class="a" style="left:1106px;top:708px;width:7px;height:1px;background:#424242"></div>
<div class="a" style="left:1120px;top:708px;width:99px;height:1px;background:#8a8a8a"></div>
<div class="a" style="left:1167px;top:703px;width:5px;height:11px;background:#5c5c5c;border-radius:1px"></div>
<svg style="left:1224px;top:703px" width="9" height="9" viewBox="0 0 9 9"><path d="M4.5 0 V9 M0 4.5 H9" stroke="#424242" stroke-width="1"/></svg>
<div class="t" style="left:1245.50px;top:704.44px;font-size:10.5px;color:#242424;font-weight:400;">100%</div></body></html>
